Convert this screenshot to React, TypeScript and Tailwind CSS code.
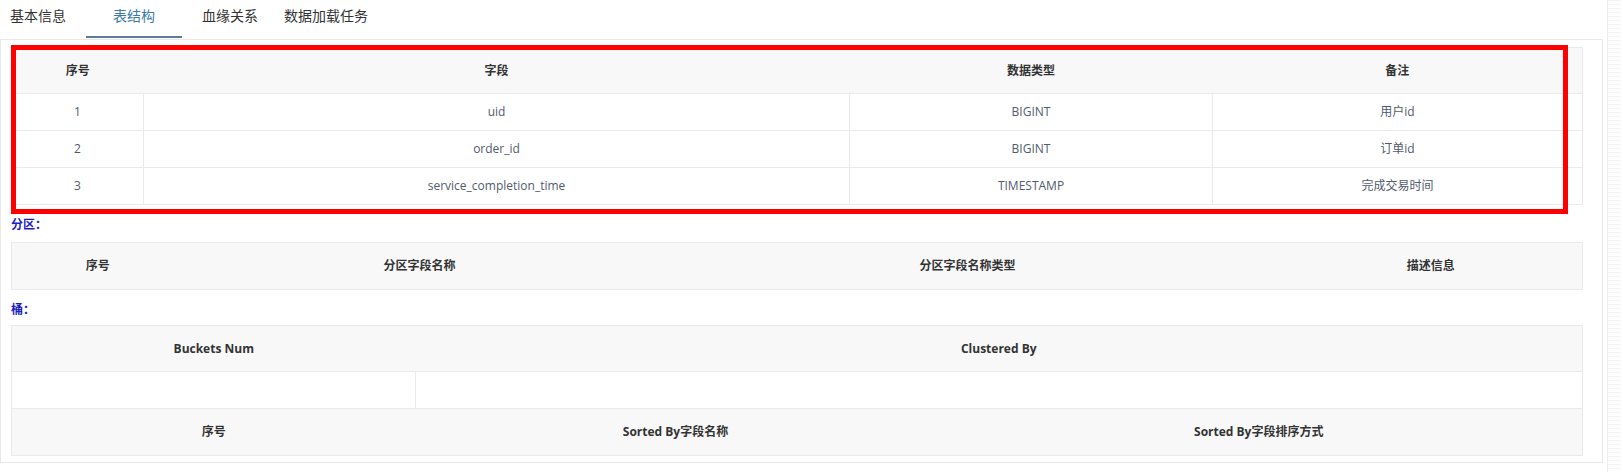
import React from "react";

const font = "font-['Open_Sans','Noto_Sans_CJK_SC',sans-serif]";

const fields = [
  { no: 1, name: "uid", type: "BIGINT", note: "用户id" },
  { no: 2, name: "order_id", type: "BIGINT", note: "订单id" },
  { no: 3, name: "service_completion_time", type: "TIMESTAMP", note: "完成交易时间" },
];

const th = "h-[46px] bg-[#f8f8f9] text-center text-[12px] font-bold text-[#333] border-b border-[#e8eaec]";
const td = "h-[37px] text-center text-[12px] text-[#515a6e] border-b border-r border-[#e8eaec] last:border-r-0";

function Tabs() {
  return (
    <div className="flex h-[39px] items-start text-[14px] text-[#333]">
      <div className="pl-[10px] pt-[6px] leading-[20px]">基本信息</div>
      <div className="ml-[20px] flex h-[39px] w-[96px] flex-col items-center justify-between pt-[6px]">
        <span className="leading-[20px] text-[#3a7aab]">表结构</span>
        <span className="mb-[1px] h-[2px] w-full bg-[#5a7e99]" />
      </div>
      <div className="ml-[20px] pt-[6px] leading-[20px]">血缘关系</div>
      <div className="ml-[26px] pt-[6px] leading-[20px]">数据加载任务</div>
    </div>
  );
}

function Label({ children, className = "h-[37px]" }: { children: React.ReactNode; className?: string }) {
  return (
    <div className={`${className} pt-[12px] text-[12px] font-bold leading-[16px] text-[#1c1cc0]`}>{children}</div>
  );
}

export default function App() {
  return (
    <div className={`relative flex h-[472px] w-[1621px] overflow-hidden bg-white ${font}`}>
      <div className="w-[1603px]">
        <Tabs />
        <div className="border border-[#e8e8e8] pb-[6px] pl-[10px] pr-[20px] pt-[7px]">
          {/* 字段 */}
          <table className="w-full table-fixed border-collapse border border-[#e8eaec]">
            <colgroup>
              <col className="w-[132px]" />
              <col className="w-[706px]" />
              <col className="w-[363px]" />
              <col className="w-[370px]" />
            </colgroup>
            <thead>
              <tr>
                <th className={th}>序号</th>
                <th className={th}>字段</th>
                <th className={th}>数据类型</th>
                <th className={th}>备注</th>
              </tr>
            </thead>
            <tbody>
              {fields.map((f) => (
                <tr key={f.no}>
                  <td className={td}>{f.no}</td>
                  <td className={td}>{f.name}</td>
                  <td className={td}>{f.type}</td>
                  <td className={td}>{f.note}</td>
                </tr>
              ))}
            </tbody>
          </table>

          <Label>分区：</Label>
          <table className="w-full table-fixed border-collapse border border-[#e8eaec]">
            <colgroup>
              <col className="w-[172px]" />
              <col className="w-[472px]" />
              <col className="w-[624px]" />
              <col className="w-[303px]" />
            </colgroup>
            <thead>
              <tr>
                <th className={`${th} h-[47px]`}>序号</th>
                <th className={`${th} h-[47px]`}>分区字段名称</th>
                <th className={`${th} h-[47px]`}>分区字段名称类型</th>
                <th className={`${th} h-[47px]`}>描述信息</th>
              </tr>
            </thead>
          </table>

          <Label className="h-[35px]">桶：</Label>
          <table className="w-full table-fixed border-collapse border border-[#e8eaec]">
            <colgroup>
              <col className="w-[404px]" />
              <col className="w-[520px]" />
              <col className="w-[647px]" />
            </colgroup>
            <tbody>
              <tr>
                <th className={th}>Buckets Num</th>
                <th className={th} colSpan={2}>Clustered By</th>
              </tr>
              <tr>
                <td className={td}></td>
                <td className={td} colSpan={2}></td>
              </tr>
              <tr>
                <th className={`${th} h-[47px] border-b-0`}>序号</th>
                <th className={`${th} h-[47px] border-b-0`}>Sorted By字段名称</th>
                <th className={`${th} h-[47px] border-b-0`}>Sorted By字段排序方式</th>
              </tr>
            </tbody>
          </table>
        </div>
      </div>
      <div className="ml-[4px] h-full w-[14px] border-l border-[#eeeeee] bg-[repeating-linear-gradient(to_bottom,#f3f3f3_0px,#f3f3f3_1px,#fdfdfd_1px,#fdfdfd_4px)]" />

      {/* annotation box */}
      <div className="pointer-events-none absolute left-[11px] top-[45px] h-[169px] w-[1557px] border-[5px] border-[#ff0000]" />
    </div>
  );
}
